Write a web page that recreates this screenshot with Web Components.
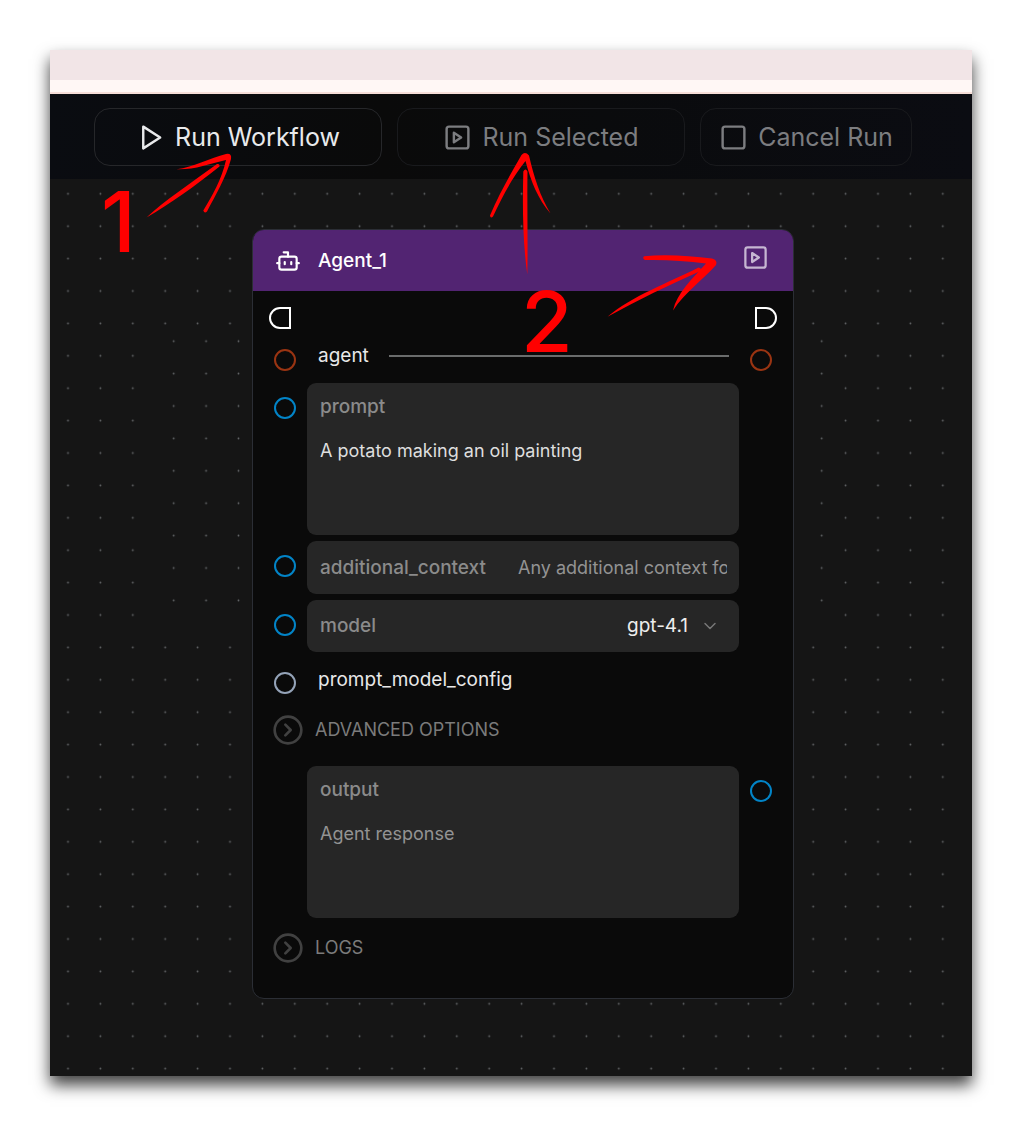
<!DOCTYPE html>
<html lang="en">
<head>
<meta charset="utf-8">
<title>Workflow editor</title>
<style>
  body { margin: 0; padding: 50px; background: #fff; font-family: Inter, "Liberation Sans", sans-serif; }
</style>
</head>
<body>
<app-window>
  <run-toolbar slot="toolbar">
    <tool-button icon="play" wide>Run Workflow</tool-button>
    <tool-button icon="square-play" wide disabled>Run Selected</tool-button>
    <tool-button icon="square" disabled>Cancel Run</tool-button>
  </run-toolbar>
  <flow-canvas>
    <agent-node>
      <span slot="title">Agent_1</span>
      <flow-row></flow-row>
      <node-row in="#9a3412" out="#9a3412"><link-label>agent</link-label></node-row>
      <node-row in="#0284c7"><area-field label="prompt" value="A potato making an oil painting"></area-field></node-row>
      <node-row in="#0284c7"><line-field label="additional_context" placeholder="Any additional context for the agent"></line-field></node-row>
      <node-row in="#0284c7"><choice-field label="model" value="gpt-4.1"></choice-field></node-row>
      <node-row in="#94a3b8"><link-label plain>prompt_model_config</link-label></node-row>
      <fold-toggle>ADVANCED OPTIONS</fold-toggle>
      <node-row out="#0284c7" spaced><area-field label="output" placeholder="Agent response"></area-field></node-row>
      <fold-toggle>LOGS</fold-toggle>
    </agent-node>
  </flow-canvas>
  <note-layer slot="notes"></note-layer>
</app-window>

<script>
const ICONS = {
  'play': '<path d="M6 3l14 9-14 9z"/>',
  'square': '<rect x="3" y="3" width="18" height="18" rx="2"/>',
  'square-play': '<rect x="3" y="3" width="18" height="18" rx="2"/><path d="M9 8l6 4-6 4z"/>',
  'bot': '<path d="M12 8V4H8"/><rect x="4" y="8" width="16" height="12" rx="2"/><path d="M2 14h2M20 14h2M15 13v2M9 13v2"/>',
  'fold': '<circle cx="12" cy="12" r="10"/><path d="M10 8l4 4-4 4"/>',
  'down': '<path d="M6 9l6 6 6-6"/>'
};
const icon = (name, size, stroke = 2) =>
  `<svg width="${size}" height="${size}" viewBox="0 0 24 24" fill="none" stroke="currentColor" stroke-width="${stroke}" stroke-linecap="round" stroke-linejoin="round" aria-hidden="true">${ICONS[name]}</svg>`;

class Base extends HTMLElement {
  connectedCallback() {
    if (this.shadowRoot) return;
    this.attachShadow({ mode: 'open' }).innerHTML =
      `<style>:host,*{box-sizing:border-box} svg{display:block;flex:none} button,input,textarea,select{font:inherit;color:inherit;background:none;border:0;margin:0;padding:0;outline:0}</style>` + this.render();
  }
}
const define = (name, render) => customElements.define(name, class extends Base { render() { return render(this); } });

define('app-window', () => `
  <style>
    :host { display: block; position: relative; background: #151515; box-shadow: 0 9px 15px rgba(0,0,0,.75); }
    .tabs { height: 30px; background: #f2e5e7; }
    .bar { height: 14px; background: #fff7f5; border-bottom: 2px solid #f6ded8; }
  </style>
  <div class="tabs"></div><div class="bar"></div>
  <slot name="toolbar"></slot>
  <slot></slot>
  <slot name="notes"></slot>`);

define('run-toolbar', () => `
  <style>
    :host { display: flex; gap: 15px; padding: 14px 44px 13px; background: linear-gradient(90deg, #0a0c11, #0a0a0a 36%, #0a0b0d 60%, #0b0c12); }
  </style><slot></slot>`);

define('tool-button', el => `
  <style>
    :host { display: block; flex: 0 1 212px; }
    :host([wide]) { flex-basis: 288px; }
    button { width: 100%; height: 58px; display: flex; align-items: center; justify-content: center; gap: 10px;
      border: 1px solid #26272a; border-radius: 16px; color: #e9eaec; font-size: 25px; line-height: 32px; white-space: nowrap; }
    button:disabled { color: #7c7d80; border-color: #191a1d; }
  </style>
  <button type="button" ${el.hasAttribute('disabled') ? 'disabled' : ''}>${icon(el.getAttribute('icon'), 29)}<slot></slot></button>`);

define('flow-canvas', () => `
  <style>
    :host { display: block; position: relative; padding: 50px 178px 77px 202px; }
    .grid { position: absolute; inset: 0; width: 100%; height: 100%; }
    .node { position: relative; }
  </style>
  <svg class="grid" aria-hidden="true">
    <defs>
      <pattern id="a" patternUnits="userSpaceOnUse" x="1.8" y="-1.4" width="32.4" height="32.4"><circle cx="16.2" cy="16.2" r=".9" fill="#66686b"/></pattern>
      <pattern id="b" patternUnits="userSpaceOnUse" x="10.3" y="16.4" width="32.4" height="32.4"><circle cx="16.2" cy="16.2" r=".9" fill="#66686b"/></pattern>
    </defs>
    <rect width="100%" height="100%" fill="url(#a)"/>
    <g><rect x="93" y="148" width="683" height="293" fill="#151515"/><rect x="93" y="148" width="683" height="293" fill="url(#b)"/></g>
  </svg>
  <div class="node"><slot></slot></div>`);

define('agent-node', () => `
  <style>
    :host { display: block; background: #0a0a0a; border: 1px solid #2b2e35; border-radius: 12px; overflow: hidden; color: #e8e8e8; font-size: 18px; line-height: 24px; }
    header { display: flex; align-items: center; height: 61px; padding: 0 24px 0 22px; gap: 17px; background: #522472; color: #fff; font-size: 19px; font-weight: 500; }
    .title { flex: 1; }
    button { color: #c6b6d2; padding-bottom: 6px; }
    .body { display: flex; flex-direction: column; gap: 6px; padding: 16px 0 28px; }
  </style>
  <header>${icon('bot', 26)}<span class="title"><slot name="title"></slot></span><button type="button" aria-label="Run node">${icon('square-play', 27)}</button></header>
  <div class="body"><slot></slot></div>`);

define('flow-row', () => `
  <style>:host { display: flex; justify-content: space-between; padding: 0 16px; }</style>
  <svg width="22" height="22" viewBox="0 0 22 22" fill="none" stroke="#fff" stroke-width="2"><path d="M21 1H11a10 10 0 0 0 0 20h10z"/></svg>
  <svg width="22" height="22" viewBox="0 0 22 22" fill="none" stroke="#fff" stroke-width="2"><path d="M1 1h10a10 10 0 0 1 0 20H1z"/></svg>`);

define('node-row', el => {
  const port = c => c ? `<i style="border-color:${c}"></i>` : '';
  return `
  <style>
    :host { display: grid; grid-template-columns: 54px minmax(0,1fr) 54px; }
    :host([spaced]) { padding: 8px 0 2px; }
    span { padding: 14px 11px 0 21px; height: 0; }
    .out { padding-left: 11px; }
    i { display: block; width: 22px; height: 22px; border: 2px solid; border-radius: 50%; }
  </style>
  <span>${port(el.getAttribute('in'))}</span><slot></slot><span class="out">${port(el.getAttribute('out'))}</span>`;
});

define('link-label', el => `
  <style>
    :host { display: flex; align-items: center; gap: 20px; height: 42px; padding: 0 10px 0 11px; font-size: 19px; }
    :host([plain]) { height: 44px; }
    hr { flex: 1; margin: 0; border: 0; height: 2px; background: #6a6c6c; }
  </style><slot></slot>${el.hasAttribute('plain') ? '' : '<hr>'}`);

const FIELD = `
  :host { display: block; background: #262626; border-radius: 9px; }
  label { color: #8b8b8b; font-size: 19px; font-weight: 500; }
  ::placeholder { color: #939393; opacity: 1; }`;

define('area-field', el => `
  <style>${FIELD}
    :host { height: 152px; padding: 12px 13px; }
    label, textarea { display: block; }
    textarea { width: 100%; height: 84px; margin-top: 20px; resize: none; overflow: hidden; color: #dedede; }
  </style>
  <label for="f">${el.getAttribute('label')}</label>
  <textarea id="f" placeholder="${el.getAttribute('placeholder') || ''}">${el.getAttribute('value') || ''}</textarea>`);

define('line-field', el => `
  <style>${FIELD}
    :host { display: flex; align-items: center; gap: 32px; height: 53px; padding: 0 12px 0 13px; }
    input { flex: 1; min-width: 0; }
  </style>
  <label for="f">${el.getAttribute('label')}</label><input id="f" type="text" placeholder="${el.getAttribute('placeholder')}">`);

define('choice-field', el => `
  <style>${FIELD}
    :host { display: flex; align-items: center; gap: 11px; height: 52px; padding: 0 19px 0 13px; color: #777; }
    label { flex: 1; }
    select { appearance: none; color: #ededed; font-size: 19px; }
  </style>
  <label for="f">${el.getAttribute('label')}</label>
  <select id="f"><option>${el.getAttribute('value')}</option></select>${icon('down', 20, 1.8)}`);

define('fold-toggle', () => `
  <style>
    :host { display: block; color: #7b7b7b; }
    button { display: flex; align-items: center; gap: 11px; height: 44px; padding-left: 19px; }
    svg { color: #414141; }
  </style>
  <button type="button" aria-expanded="false">${icon('fold', 32)}<slot></slot></button>`);

// Hand-drawn arrows and step numbers laid over the window.
define('note-layer', () => `
  <style>
    :host { position: absolute; inset: 0; overflow: hidden; pointer-events: none; }
    text { font-family: Inter, "Liberation Sans", sans-serif; font-size: 84px; font-weight: 500; }
  </style>
  <svg width="922" height="1026" viewBox="50 50 922 1026" fill="#f00">
    <path d="M176.5 169.3C194 167 210 158 226 154Q232 153 231 159C226 178 215 196 207 211.500Q204.500 214 203.300 210.500C212 196 222 179 226 160C209 164 194 170 176.500 169.300Z"/>
    <path d="M146.500 217.500C164 201 191 183 217 164Q220 163.500 219.500 166.500C195 186 170 204 146.500 217.500Z"/>
    <path d="M490 215.500C500 192 510 175 521.500 155Q525 151 529 155.500C534 177 540 196 550.500 213.500C538 199 531 182 525.500 161C512 178 502 197 493 216.500Q490.500 219 490 215.500Z"/>
    <path d="M523.300 171.500Q525.500 167.500 527.500 171.500C527 205 528 240 527.300 274.500C522.500 240 522.500 205 523.300 171.500Z"/>
    <path d="M644 256.300C666 254 690 256 712 258.500Q718 260 716 265C703 280 685 292 673 310.500C677 293 692 279 706 263.500C686 261 666 259.500 645 260Q642 258.500 644 256.300Z"/>
    <path d="M607.500 316.700C632 296 668 283 698.500 267.500Q702 268 700.500 271C669 285 638 300 607.500 316.700Z"/>
    <text x="101" y="252">1</text>
    <text x="521" y="352">2</text>
  </svg>`);
</script>
</body>
</html>
